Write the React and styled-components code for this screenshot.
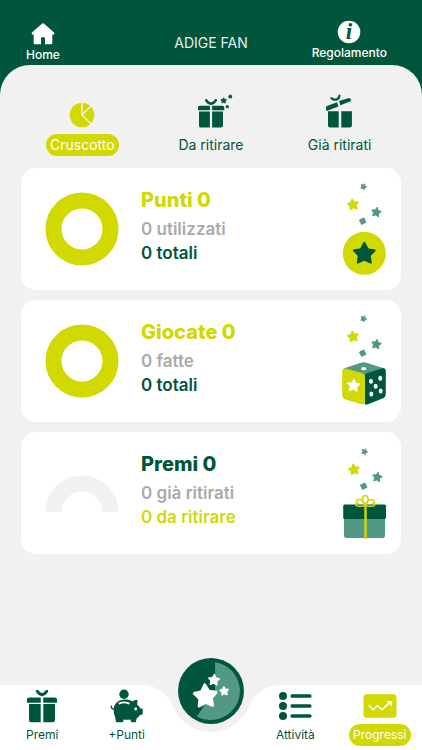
import React, { useState } from "react";
import styled, { createGlobalStyle, ThemeProvider } from "styled-components";

const theme = {
  green: "#00563c",
  teal: "#539885",
  lime: "#d1d900",
  grey: "#aaaaaa",
  light: "#f1f1f1",
};

const starPoints = (cx, cy, r, tilt = 0, spikes = 5) => {
  const inner = spikes === 4 ? 0.72 : 0.52;
  return Array.from({ length: spikes * 2 }, (_, i) => {
    const radius = i % 2 ? r * inner : r;
    const angle = ((i * 180) / spikes - 90 + tilt) * (Math.PI / 180);
    return `${(cx + radius * Math.cos(angle)).toFixed(2)},${(
      cy +
      radius * Math.sin(angle)
    ).toFixed(2)}`;
  }).join(" ");
};

const Star = ({ x, y, r, tilt, spikes, fill, round = 1 }) => (
  <polygon
    points={starPoints(x, y, r - round / 2, tilt, spikes)}
    fill={fill}
    stroke={fill}
    strokeWidth={round}
    strokeLinejoin="round"
  />
);

// ---- icons ----

const HomeIcon = () => (
  <svg width="24" height="24" viewBox="0 0 24 24" aria-hidden="true">
    <path
      d="M11.2 1.6a1.2 1.2 0 0 1 1.6 0l10 8.6c1.1 1 .5 2.4-.8 2.4h-.7V21a1.2 1.2 0 0 1-1.2 1.2H14v-5.9a1 1 0 0 0-1-1h-2a1 1 0 0 0-1 1v5.9H3.9A1.2 1.2 0 0 1 2.7 21v-8.4H2c-1.3 0-1.9-1.4-.8-2.4z"
      fill="#fff"
    />
  </svg>
);

const InfoIcon = () => (
  <svg width="24" height="24" viewBox="0 0 24 24" aria-hidden="true">
    <circle cx="12" cy="12" r="11.3" fill="#fff" />
    <text
      x="12"
      y="19"
      textAnchor="middle"
      fontFamily="Liberation Serif, serif"
      fontStyle="italic"
      fontWeight="700"
      fontSize="23"
      fill={theme.green}
    >
      i
    </text>
  </svg>
);

const PieIcon = () => (
  <svg width="40" height="36" viewBox="0 0 40 36" aria-hidden="true">
    <circle cx="20" cy="21" r="12.3" fill="currentColor" />
    <path
      d="M20 8v13l9.5 9.5M20 21l9-9"
      stroke={theme.light}
      strokeWidth="1.4"
      fill="none"
    />
  </svg>
);

const GiftStarsIcon = () => (
  <svg
    width="40"
    height="36"
    viewBox="0 0 40 36"
    overflow="visible"
    fill="currentColor"
    aria-hidden="true"
  >
    <path d="M18.9 11.8v4.4H7v-2.6a1.8 1.8 0 0 1 1.8-1.8zM21.1 11.8v4.4h12.2v-2.6a1.8 1.8 0 0 0-1.8-1.8z" />
    <path d="M18.9 17.6v16H10a2 2 0 0 1-2-2v-14zM21.1 17.6v16H30a2 2 0 0 0 2-2v-14z" />
    <path
      d="M15.2 6.3c1 1.7 2.500 3 4.800 3.400 2.300-.4 3.800-1.700 4.800-3.400"
      fill="none"
      stroke="currentColor"
      strokeWidth="2.600"
      strokeLinecap="round"
    />
    <Star x={32.7} y={6.7} r={3.4} fill="currentColor" />
    <Star x={39.3} y={2.6} r={2.4} fill="currentColor" />
    <Star x={36.3} y={12.7} r={2} fill="currentColor" />
  </svg>
);

const GiftOpenIcon = () => (
  <svg
    width="40"
    height="36"
    viewBox="0 0 40 36"
    fill="currentColor"
    aria-hidden="true"
  >
    <path d="M6 15.3c-.3-1.800.2-3 1.700-3.600L17 8.200l1.400 4.400L6.600 16.900zM19 7.100l9.300-2.900c1.600-.4 2.500.5 2.900 2.900L20.400 11.200z" />
    <path d="M8 17.3h10.700v16.100H10a2 2 0 0 1-2-2zM21.300 17.300h10.600v14.100a2 2 0 0 1-2 2h-8.600z" />
    <path
      d="M11.5 4.300c1.600 1.200 3.300 1.800 5.200 1.100 1.600-.7 2.600-2 2.800-3.800"
      fill="none"
      stroke="currentColor"
      strokeWidth="2.300"
      strokeLinecap="round"
    />
  </svg>
);

const GiftIcon = () => (
  <svg
    width="36"
    height="36"
    viewBox="0 0 36 36"
    fill="currentColor"
    aria-hidden="true"
  >
    <path d="M16.700 9.600v5.100H3v-2.900a2.200 2.200 0 0 1 2.200-2.200zM19.300 9.600v5.100H33v-2.900a2.200 2.200 0 0 0-2.200-2.200z" />
    <path d="M16.700 16.100v18.100H7.200a2.200 2.200 0 0 1-2.200-2.200V16.100zM19.300 16.100v18.100h9.500A2.200 2.200 0 0 0 31 32V16.100z" />
    <path
      d="M13.200 3.300c1 1.700 2.500 3 4.800 3.400 2.300-.4 3.800-1.700 4.800-3.400"
      fill="none"
      stroke="currentColor"
      strokeWidth="2.900"
      strokeLinecap="round"
    />
  </svg>
);

const PiggyIcon = () => (
  <svg
    width="36"
    height="36"
    viewBox="0 0 36 36"
    fill="currentColor"
    aria-hidden="true"
  >
    <circle cx="15" cy="6.3" r="4.7" />
    <path d="M4.700 22c0-6.700 4.800-10.500 11.300-10.500 3 0 5.400.5 7.600 1.900 1.300-1.200 3-1.600 5-1.400l-.5 4.500c1.500 1.100 2.600 2.500 3.200 4.100h1.400c.7 0 1 .4 1 1v4.100c0 .6-.3 1-1 1.100l-1.700.3c-.9 1.400-2 2.500-3.400 3.400l-.6 2.900c-.1.500-.4.800-1 .8h-3.100c-.5 0-.8-.2-.9-.7l-.5-2c-2.300.3-4.600.3-6.900 0l-.4 1.900c-.1.500-.4.800-.9.800H7.800c-.6 0-.9-.3-1-.8l-.6-4.300c-1-1.900-1.500-4.300-1.500-7.100z" />
    <path
      d="M5.600 21.300C3.400 21.300 2.200 20.300 2.300 18.300"
      fill="none"
      stroke="currentColor"
      strokeWidth="1.4"
      strokeLinecap="round"
    />
    <path
      d="M10.300 15.400c3.100-1.300 6.300-1.300 9.400 0"
      fill="none"
      stroke="#fff"
      strokeWidth="1.9"
      strokeLinecap="round"
    />
    <circle cx="26.7" cy="21" r="1.4" fill="#fff" />
  </svg>
);

const ListIcon = () => (
  <svg width="36" height="36" viewBox="0 0 36 36" aria-hidden="true">
    {[8, 18, 28].map((y) => (
      <g key={y} fill="currentColor">
        <circle cx="6" cy={y} r="4" />
        <rect x="13.5" y={y - 1.8} width="21" height="3.6" rx="1.5" />
      </g>
    ))}
  </svg>
);

const TrendIcon = () => (
  <svg width="36" height="36" viewBox="0 0 36 36" aria-hidden="true">
    <rect x="1.5" y="6.3" width="33" height="23.4" rx="3" fill="currentColor" />
    <path
      d="M6.700 17.500l4.500 4.200 4-4.200 4.700 4.200 8.100-7.300"
      fill="none"
      stroke="#fff"
      strokeWidth="1.6"
    />
    <path d="M24.300 13h5.900v5.900z" fill="#fff" />
  </svg>
);

const PlayIcon = () => (
  <svg width="66" height="66" viewBox="0 0 65 65" aria-hidden="true">
    <circle cx="32.5" cy="32.5" r="32.5" fill={theme.green} />
    <path
      d="M36.500 4.200A28.600 28.600 0 1 1 18.500 57.500L36.500 32z"
      fill={theme.teal}
    />
    <Star x={27} y={37.8} r={12.8} tilt={-3} round={3} fill="#fff" />
    <Star x={35.4} y={21.8} r={6.2} tilt={5} round={1.5} fill="#fff" />
    <Star x={45.5} y={32.7} r={5} tilt={-5} round={1.5} fill="#fff" />
  </svg>
);

// ---- card drawings ----

const Sparkles = () => (
  <>
    <Star x={23.5} y={4.7} r={3.6} tilt={25} fill={theme.teal} />
    <Star x={13} y={22.7} r={6.5} tilt={-8} fill={theme.lime} />
    <Star x={36.3} y={30.3} r={5.6} tilt={10} fill={theme.teal} />
    <Star x={22.7} y={39.2} r={3.9} tilt={20} spikes={4} fill={theme.teal} />
  </>
);

const CoinArt = () => (
  <svg width="48" height="94" viewBox="0 0 48 94" aria-hidden="true">
    <Sparkles />
    <circle cx="24.3" cy="71.3" r="21.5" fill={theme.lime} />
    <Star x={24.3} y={71.8} r={12} round={2} fill={theme.green} />
  </svg>
);

const DiceArt = () => (
  <svg width="48" height="94" viewBox="0 0 48 94" aria-hidden="true">
    <Sparkles />
    <path
      d="M3.500 54.500L21 48.700q2.800-1 5.600 0L44.500 54.500 25 62z"
      fill={theme.teal}
    />
    <path
      d="M24.500 61.500q.3-1.500 2.500-2.300L42.500 54.300q3.300-.6 3.300 2.600V79.500q0 3.800-3.300 5L28 90.300q-3.500 1-3.500-1z"
      fill={theme.green}
    />
    <path
      d="M2.200 57.500q0-3.500 3.300-3L21.500 58.800q3.500 1 3.500 4.200V88q0 3-3.500 2.200L5.500 85.500Q2.200 84.200 2.200 81z"
      fill={theme.lime}
    />
    <ellipse cx="23.7" cy="54.7" rx="2.6" ry="1.6" fill="#fff" />
    <Star x={13.6} y={71.7} r={7.2} tilt={4} fill="#fff" />
    {[
      [31, 67.3],
      [40.3, 64.3],
      [35.7, 72.3],
      [31.3, 80],
      [40.7, 77],
    ].map(([x, y]) => (
      <ellipse key={`${x}-${y}`} cx={x} cy={y} rx="2" ry="2.5" fill="#fff" />
    ))}
  </svg>
);

const PresentArt = () => (
  <svg width="48" height="94" viewBox="0 0 48 94" aria-hidden="true">
    <g transform="translate(1 1)">
      <Sparkles />
    </g>
    <path
      d="M4 71h41v18.500a2.500 2.500 0 0 1-2.500 2.500h-36A2.500 2.500 0 0 1 4 89.500z"
      fill={theme.teal}
    />
    <rect x="3.2" y="58.5" width="42.8" height="14.5" rx="1.5" fill={theme.green} />
    <path d="M25.500 59v34" stroke={theme.lime} strokeWidth="2.4" />
    <g fill="none" stroke={theme.lime} strokeWidth="1.5">
      <path d="M25.300 59.300c-4-4-3.500-9.800 0-9.800s4 5.800 0 9.800z" />
      <path d="M25.300 59.300c-1.500-5-5.800-6.800-8.200-5.300-2 1.500-.5 3.500 1.400 3.300-2.800.3-3.500 2-1.800 2.500 3 .8 6.500.5 8.600-.5z" />
      <path d="M25.300 59.300c1.500-5 5.800-6.800 8.200-5.300 2 1.500.5 3.500-1.400 3.300 2.800.3 3.500 2 1.800 2.500-3 .8-6.500.5-8.600-.5z" />
    </g>
  </svg>
);

const Donut = ({ half }) =>
  half ? (
    <svg width="74" height="37" viewBox="0 0 74 37" aria-hidden="true">
      <path
        d="M8.500 37a28.500 28.500 0 0 1 57 0"
        fill="none"
        stroke={theme.light}
        strokeWidth="16"
      />
    </svg>
  ) : (
    <svg width="74" height="74" viewBox="0 0 74 74" aria-hidden="true">
      <circle
        cx="37"
        cy="37"
        r="28.5"
        fill="none"
        stroke={theme.lime}
        strokeWidth="16"
      />
    </svg>
  );

const NotchCurve = () => (
  <Notch viewBox="0 0 138 48" aria-hidden="true">
    <path
      d="M0 0A33 33 0 0 1 30.800 21A41 41 0 0 0 107.200 21A33 33 0 0 1 138 0z"
      fill={theme.light}
    />
  </Notch>
);

const tabs = [
  { id: "cruscotto", label: "Cruscotto", icon: <PieIcon /> },
  { id: "da-ritirare", label: "Da ritirare", icon: <GiftStarsIcon /> },
  { id: "ritirati", label: "Già ritirati", icon: <GiftOpenIcon /> },
];

const cards = [
  {
    title: "Punti 0",
    titleColor: "lime",
    first: "0 utilizzati",
    second: "0 totali",
    secondColor: "green",
    art: <CoinArt />,
  },
  {
    title: "Giocate 0",
    titleColor: "lime",
    first: "0 fatte",
    second: "0 totali",
    secondColor: "green",
    art: <DiceArt />,
  },
  {
    title: "Premi 0",
    titleColor: "green",
    first: "0 già ritirati",
    second: "0 da ritirare",
    secondColor: "lime",
    half: true,
    art: <PresentArt />,
  },
];

const App = () => {
  const [tab, setTab] = useState("cruscotto");

  return (
    <ThemeProvider theme={theme}>
      <GlobalStyle />
      <Page>
        <Header>
          <HomeLink href="#home">
            <HomeIcon />
            Home
          </HomeLink>
          <Title>ADIGE FAN</Title>
          <RulesLink href="#regolamento">
            <InfoIcon />
            Regolamento
          </RulesLink>
        </Header>
        <Panel>
          <Tabs>
            {tabs.map(({ id, label, icon }) => (
              <Tab
                key={id}
                type="button"
                $active={tab === id}
                aria-pressed={tab === id}
                onClick={() => setTab(id)}
              >
                {icon}
                <TabLabel $active={tab === id}>{label}</TabLabel>
              </Tab>
            ))}
          </Tabs>
          <Cards>
            {cards.map((card) => (
              <Card key={card.title}>
                <Donut half={card.half} />
                <Stats>
                  <CardTitle $color={card.titleColor}>{card.title}</CardTitle>
                  <Stat $color="grey">{card.first}</Stat>
                  <Stat $color={card.secondColor}>{card.second}</Stat>
                </Stats>
                {card.art}
              </Card>
            ))}
          </Cards>
        </Panel>
        <BottomNav>
          <NotchCurve />
          <NavLink href="#premi">
            <GiftIcon />
            <NavLabel>Premi</NavLabel>
          </NavLink>
          <NavLink href="#punti">
            <PiggyIcon />
            <NavLabel>+Punti</NavLabel>
          </NavLink>
          <PlaySlot>
            <PlayButton type="button" aria-label="Gioca">
              <PlayIcon />
            </PlayButton>
          </PlaySlot>
          <NavLink href="#attivita">
            <ListIcon />
            <NavLabel>Attività</NavLabel>
          </NavLink>
          <NavLink href="#progressi" $active>
            <TrendIcon />
            <NavLabel $active>Progressi</NavLabel>
          </NavLink>
        </BottomNav>
      </Page>
    </ThemeProvider>
  );
};

export default App;

const GlobalStyle = createGlobalStyle`
  * {
    box-sizing: border-box;
  }

  body {
    margin: 0;
    background: ${theme.green};
    font-family: Inter, Roboto, sans-serif;
  }

  svg {
    display: block;
    flex-shrink: 0;
  }

  button {
    border: 0;
    padding: 0;
    background: none;
    font-family: inherit;
    cursor: pointer;
  }

  a {
    text-decoration: none;
  }
`;

const Page = styled.div`
  min-height: 100vh;
  display: flex;
  flex-direction: column;
  background: ${(props) => props.theme.green};
`;

const Header = styled.header`
  display: grid;
  grid-template-columns: 1fr auto 1fr;
  align-items: start;
  padding: 20px 0 2px;
`;

const HeaderLink = styled.a`
  display: flex;
  flex-direction: column;
  align-items: center;
  gap: 1px;
  color: #fff;
  font-size: 12px;
  font-weight: 500;
  line-height: 16px;
`;

const HomeLink = styled(HeaderLink)`
  justify-self: start;
  margin-left: 26px;
  padding-top: 2px;
`;

const RulesLink = styled(HeaderLink)`
  justify-self: end;
  margin-right: 35px;
`;

const Title = styled.h1`
  margin: 0;
  padding-top: 2px;
  align-self: center;
  color: #e5efec;
  font-size: 14px;
  font-weight: 400;
  line-height: 20px;
`;

const Panel = styled.main`
  flex: 1;
  padding: 29px 0 24px;
  border-radius: 30px 30px 0 0;
  background: ${(props) => props.theme.light};
`;

const Tabs = styled.div`
  display: grid;
  grid-template-columns: repeat(3, 1fr);
  padding: 0 18px;
`;

const Tab = styled.button`
  display: flex;
  flex-direction: column;
  align-items: center;
  gap: 4px;
  color: ${(props) => (props.$active ? props.theme.lime : props.theme.green)};
`;

const TabLabel = styled.span`
  padding: 0 4px;
  border-radius: 11px;
  font-size: 14px;
  line-height: 22px;
  color: ${(props) => (props.$active ? "#fff" : props.theme.green)};
  background: ${(props) => (props.$active ? props.theme.lime : "transparent")};
`;

const Cards = styled.div`
  display: flex;
  flex-direction: column;
  gap: 10px;
  padding: 12px 21px 0;
`;

const Card = styled.section`
  display: flex;
  align-items: center;
  padding: 14px 13px 14px 24px;
  border-radius: 15px;
  background: #fff;
`;

const Stats = styled.div`
  flex: 1;
  padding: 0 0 8px 22px;
`;

const CardTitle = styled.h2`
  margin: 0 0 3px;
  font-size: 20px;
  font-weight: 800;
  line-height: 28px;
  color: ${(props) => props.theme[props.$color]};
`;

const Stat = styled.p`
  margin: 0;
  font-size: 17px;
  font-weight: 600;
  line-height: 24px;
  color: ${(props) => props.theme[props.$color]};
`;

const BottomNav = styled.nav`
  position: sticky;
  bottom: 0;
  display: grid;
  grid-template-columns: repeat(5, 1fr);
  padding: 3px 0 4px;
  background: #fff;
`;

const Notch = styled.svg`
  position: absolute;
  top: 0;
  left: 50%;
  width: 138px;
  height: 48px;
  transform: translateX(-50%);
`;

const NavLink = styled.a`
  display: flex;
  flex-direction: column;
  align-items: center;
  position: relative;
  color: ${(props) => (props.$active ? props.theme.lime : props.theme.green)};
`;

const NavLabel = styled.span`
  padding: 0 4px;
  border-radius: 11px;
  font-size: 12px;
  line-height: 22px;
  color: ${(props) => (props.$active ? "#fff" : props.theme.green)};
  background: ${(props) => (props.$active ? props.theme.lime : "transparent")};
`;

const PlaySlot = styled.div`
  display: flex;
  justify-content: center;
  align-items: flex-start;
`;

// sits over the notch and sticks out above the bar
const PlayButton = styled.button`
  position: absolute;
  top: -27px;
  border-radius: 50%;
`;
